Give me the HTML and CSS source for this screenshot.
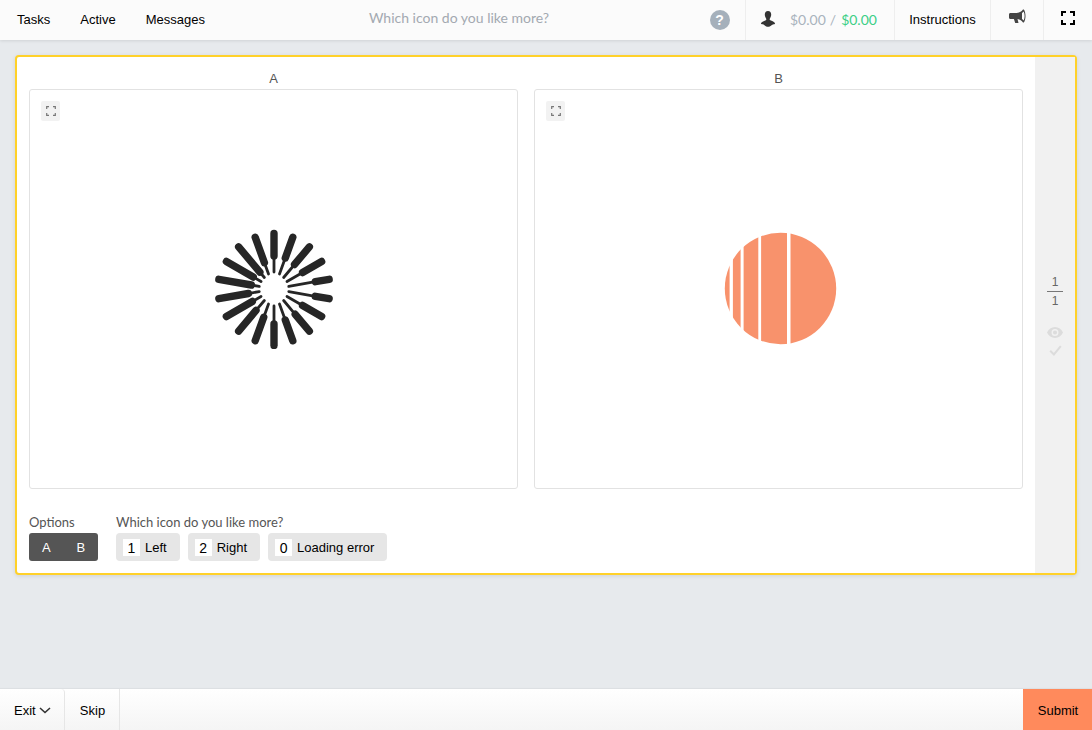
FILE: index.html
```html
<!DOCTYPE html>
<html lang="en">
<head>
<meta charset="utf-8">
<title>Which icon do you like more?</title>
<link rel="stylesheet" href="styles.css">
</head>
<body>
<header class="topbar">
  <nav class="nav">
    <a class="nav-link">Tasks</a>
    <a class="nav-link">Active</a>
    <a class="nav-link">Messages</a>
  </nav>
  <div class="prompt">Which icon do you like more?</div>
  <div class="help"><span class="help-badge">?</span></div>
  <div class="wallet">
    <svg class="user-icon" viewBox="0 0 16 16" width="16" height="16"><path d="M8 0C5.800 0 4.800 1.600 4.800 3.600c0 1.700.7 3.200 1.400 4.200.2.300.2.800-.1 1.100-1 .7-3.600 1.300-4.600 2.600-.3.400-.5.900-.6 1.400 1.700.2 2.900.7 3.900 1.500.8.600 2 1.300 3.200 1.300s2.400-.7 3.200-1.300c1-.8 2.200-1.300 3.900-1.500-.1-.5-.3-1-.6-1.400-1-1.300-3.600-1.900-4.600-2.600-.3-.3-.3-.8-.1-1.100.7-1 1.400-2.500 1.400-4.200C11.200 1.600 10.200 0 8 0z"/></svg>
    <span class="earned">$0.00</span><span class="slash">/</span><span class="balance">$0.00</span>
  </div>
  <a class="instructions">Instructions</a>
  <div class="bar-icon">
    <svg viewBox="0 0 17 16" width="17" height="16"><path d="M0 5.500C0 4.700.6 4 1.400 4H7c3 0 5.500-1.500 7-3.500h.8c1.200 1.500 1.700 4.200 1.700 6.500s-.5 5-1.700 6.500H14c-1.200-1.700-3-3-5.500-3.400l1 3.900H6.200L4.900 10H1.400C.6 10 0 9.300 0 8.500z"/><path class="mega-cut" d="M14.700 2.500c-.5.600-1 1.100-1.700 1.600v5.800c.7.500 1.200 1 1.700 1.600.6-1.300.9-3 .9-4.500s-.3-3.200-.9-4.500z"/></svg>
  </div>
  <div class="bar-icon bar-full">
    <svg viewBox="0 0 14 14" width="14" height="14"><path class="corners" d="M1 5V1h4M9 1h4v4M13 9v4H9M5 13H1V9"/></svg>
  </div>
</header>

<main class="workspace">
  <section class="card">
    <div class="content">
      <div class="panels">
        <figure class="panel">
          <figcaption class="panel-title">A</figcaption>
          <div class="frame">
            <button class="zoom-btn"><svg viewBox="0 0 10 10" width="10" height="10"><path class="zoom-corners" d="M.7 3V.7H3M7 .7h2.300V3M9.300 7v2.300H7M3 9.300H.7V7"/></svg></button>
            <svg class="burst" viewBox="-60 -60 120 120" width="120" height="120">
              <g transform="rotate(0)"><line class="thin" y1="-17" y2="-33"/><line class="thick" y1="-33" y2="-55.500"/></g>
              <g transform="rotate(20)"><line class="thin" y1="-16" y2="-33"/><line class="thick" y1="-33" y2="-55"/></g>
              <g transform="rotate(40)"><line class="thin" y1="-15" y2="-32"/><line class="thick" y1="-32" y2="-55"/></g>
              <g transform="rotate(60)"><line class="thin" y1="-15" y2="-33"/><line class="thick" y1="-33" y2="-55"/></g>
              <g transform="rotate(80)"><line class="thin" y1="-15" y2="-42"/><line class="thick" y1="-42" y2="-56"/></g>
              <g transform="rotate(100)"><line class="thin" y1="-15" y2="-42"/><line class="thick" y1="-42" y2="-56"/></g>
              <g transform="rotate(120)"><line class="thin" y1="-15" y2="-33"/><line class="thick" y1="-33" y2="-55"/></g>
              <g transform="rotate(140)"><line class="thin" y1="-15" y2="-33"/><line class="thick" y1="-33" y2="-55"/></g>
              <g transform="rotate(160)"><line class="thin" y1="-16" y2="-33"/><line class="thick" y1="-33" y2="-55"/></g>
              <g transform="rotate(180)"><line class="thin" y1="-17" y2="-35"/><line class="thick" y1="-35" y2="-56.500"/></g>
              <g transform="rotate(200)"><line class="thin" y1="-16" y2="-30"/><line class="thick" y1="-30" y2="-55"/></g>
              <g transform="rotate(220)"><line class="thin" y1="-15" y2="-28"/><line class="thick" y1="-28" y2="-55"/></g>
              <g transform="rotate(240)"><line class="thin" y1="-15" y2="-25"/><line class="thick" y1="-25" y2="-55"/></g>
              <g transform="rotate(260)"><line class="thin" y1="-15" y2="-26"/><line class="thick" y1="-26" y2="-56"/></g>
              <g transform="rotate(280)"><line class="thin" y1="-15" y2="-23"/><line class="thick" y1="-23" y2="-56"/></g>
              <g transform="rotate(300)"><line class="thin" y1="-15" y2="-24"/><line class="thick" y1="-24" y2="-55"/></g>
              <g transform="rotate(320)"><line class="thin" y1="-15" y2="-22"/><line class="thick" y1="-22" y2="-55"/></g>
              <g transform="rotate(340)"><line class="thin" y1="-16" y2="-28"/><line class="thick" y1="-28" y2="-55"/></g>
            </svg>
          </div>
        </figure>
        <figure class="panel">
          <figcaption class="panel-title">B</figcaption>
          <div class="frame">
            <button class="zoom-btn"><svg viewBox="0 0 10 10" width="10" height="10"><path class="zoom-corners" d="M.7 3V.7H3M7 .7h2.300V3M9.300 7v2.300H7M3 9.300H.7V7"/></svg></button>
            <svg class="stripes" viewBox="0 0 120 120" width="120" height="120">
              <circle class="disc" cx="61.500" cy="59.500" r="55.700"/>
              <rect class="gap" x="68" y="0" width="3.500" height="120"/>
              <rect class="gap" x="39.300" y="0" width="2.800" height="120"/>
              <rect class="gap" x="21.600" y="0" width="3" height="120"/>
              <rect class="gap" x="10.600" y="0" width="3.300" height="120"/>
            </svg>
          </div>
        </figure>
      </div>
      <div class="controls">
        <div class="group">
          <div class="group-label">Options</div>
          <div class="switch"><span class="switch-item">A</span><span class="switch-item">B</span></div>
        </div>
        <div class="group">
          <div class="group-label">Which icon do you like more?</div>
          <div class="answers">
            <button class="answer"><span class="key">1</span>Left</button>
            <button class="answer"><span class="key">2</span>Right</button>
            <button class="answer"><span class="key">0</span>Loading error</button>
          </div>
        </div>
      </div>
    </div>
    <aside class="side">
      <div class="fraction"><span class="num">1</span><span class="den">1</span></div>
      <svg class="eye" viewBox="0 0 16 11" width="16" height="11"><path fill-rule="evenodd" d="M8 0c3.500 0 6.500 2.200 8 5.500-1.500 3.300-4.500 5.500-8 5.500S1.500 8.800 0 5.500C1.500 2.200 4.500 0 8 0zm0 2a3.500 3.500 0 1 0 0 7 3.500 3.500 0 0 0 0-7zm0 1.500a2 2 0 1 1 0 4 2 2 0 0 1 0-4z"/></svg>
      <svg class="check" viewBox="0 0 13 11" width="13" height="11"><path d="M1.200 5.800l3.700 3.700 6.900-8.300"/></svg>
    </aside>
  </section>
</main>

<footer class="bottombar">
  <a class="exit">Exit<svg class="chev" viewBox="0 0 12 7" width="12" height="7"><path d="M1 1l5 4.500L11 1"/></svg></a>
  <a class="skip">Skip</a>
  <div class="spacer"></div>
  <button class="submit">Submit</button>
</footer>
</body>
</html>
```

FILE: styles.css
```css
* { box-sizing: border-box; }
html, body { height: 100%; }
body {
  margin: 0;
  display: flex;
  flex-direction: column;
  background: #e7eaed;
  color: #000;
  font: 13px/16px "Liberation Sans", Arial, sans-serif;
  overflow: hidden;
}
.topbar {
  flex: none;
  height: 40px;
  display: flex;
  align-items: stretch;
  background: #fbfbfb;
  box-shadow: 0 1px 3px rgba(0, 0, 0, .1);
}
.nav { display: flex; align-items: center; padding-left: 2px; width: 220px; }
.nav-link { padding: 0 15px; }
.prompt {
  flex: 1;
  text-align: center;
  font: 14px/36px Lato, sans-serif;
  color: #a3a9b1;
}
.help { width: 47px; display: flex; align-items: center; justify-content: center; padding-right: 4px; }
.help-badge {
  width: 20px;
  height: 20px;
  border-radius: 50%;
  background: #a5b0bb;
  color: #fff;
  font: bold 14px/20px "Liberation Sans", sans-serif;
  text-align: center;
}
.wallet {
  width: 149px;
  display: flex;
  align-items: center;
  padding-left: 14px;
  border-left: 1px solid #eee;
  font: 14px/16px Lato, sans-serif;
}
.user-icon { fill: #333; margin-right: 14px; margin-top: -3px; }
.earned { color: #a9b3bd; }
.slash { color: #a9b3bd; margin: 0 5px 0 4px; }
.balance { color: #3ccf86; }
.instructions {
  width: 96px;
  display: flex;
  align-items: center;
  justify-content: center;
  border-left: 1px solid #eee;
}
.bar-icon {
  width: 53px;
  display: flex;
  align-items: center;
  justify-content: center;
  border-left: 1px solid #eee;
  padding-bottom: 7px;
  fill: #444;
}
.mega-cut { fill: #fbfbfb; }
.bar-full { width: 49px; padding: 0 0 5px 0; }
.corners { fill: none; stroke: #000; stroke-width: 2; }

.workspace { flex: 1; padding: 15px 15px 0; }
.card {
  height: 520px;
  display: flex;
  background: #fff;
  border: 2px solid #ffd129;
  border-radius: 4px;
  box-shadow: 0 1px 4px rgba(0, 0, 0, .1);
}
.content { flex: 1; padding: 12px 12px 0; min-width: 0; }
.panels { display: flex; gap: 16px; }
.panel { flex: 1; margin: 0; min-width: 0; }
.panel-title { height: 20px; font-size: 13px; line-height: 20px; text-align: center; color: #555; }
.frame {
  position: relative;
  height: 400px;
  display: flex;
  align-items: center;
  justify-content: center;
  border: 1px solid #e2e2e2;
  border-radius: 3px;
}
.zoom-btn {
  position: absolute;
  top: 11px;
  left: 11px;
  width: 19px;
  height: 20px;
  padding: 0;
  display: flex;
  align-items: center;
  justify-content: center;
  background: #f2f2f2;
  border: 0;
  border-radius: 2px;
}
.zoom-corners { fill: none; stroke: #777; stroke-width: 1.200; }
.burst { flex: none; }
.thin { stroke: #262626; stroke-width: 2.800; stroke-linecap: round; }
.thick { stroke: #262626; stroke-width: 7.400; stroke-linecap: round; }
.disc { fill: #f8926c; }
.gap { fill: #fff; }
.controls { display: flex; gap: 18px; margin-top: 25px; }
.group-label {
  height: 19px;
  font: 13px/17px Lato, sans-serif;
  color: #555;
}
.switch {
  display: flex;
  height: 28px;
  background: #555;
  border-radius: 3px;
  color: #fff;
}
.switch-item { width: 34.500px; text-align: center; line-height: 29px; }
.answers { display: flex; gap: 8px; }
.answer {
  height: 28px;
  display: flex;
  align-items: center;
  padding: 1px 13px 0 7px;
  background: #e6e6e6;
  border: 0;
  border-radius: 4px;
  color: #000;
  font: inherit;
}
.key {
  width: 17px;
  height: 17px;
  margin: -1px 5px 0 0;
  background: #fff;
  font-size: 14px;
  line-height: 18px;
  text-align: center;
}
.side {
  flex: none;
  width: 40px;
  display: flex;
  flex-direction: column;
  align-items: center;
  background: #f1f1f1;
  padding-top: 217px;
}
.fraction { display: flex; flex-direction: column; align-items: center; width: 16px; color: #666; font-size: 12px; line-height: 16px; }
.num { border-bottom: 1px solid #777; width: 100%; text-align: center; padding-bottom: 1px; }
.den { padding-top: 1px; }
.eye { fill: #dcdcdc; margin-top: 18px; }
.check { fill: none; stroke: #dcdcdc; stroke-width: 2; margin-top: 7px; }

.bottombar {
  flex: none;
  height: 41px;
  display: flex;
  align-items: stretch;
  background: linear-gradient(#fff, #f5f5f5);
  box-shadow: 0 -1px 1px rgba(0, 0, 0, .04);
}
.exit {
  width: 65px;
  display: flex;
  align-items: center;
  padding: 2px 0 0 14px;
  border-right: 1px solid #e6e6e6;
  border-top-right-radius: 4px;
}
.chev { margin-left: 3px; fill: none; stroke: #333; stroke-width: 1.600; }
.skip {
  width: 55px;
  display: flex;
  align-items: center;
  justify-content: center;
  padding: 2px 0 0 1px;
  border-right: 1px solid #e6e6e6;
}
.spacer { flex: 1; }
.submit {
  width: 69px;
  padding: 2px 0 0 1px;
  background: #ff8a5c;
  border: 0;
  color: #000;
  font: inherit;
}
```
